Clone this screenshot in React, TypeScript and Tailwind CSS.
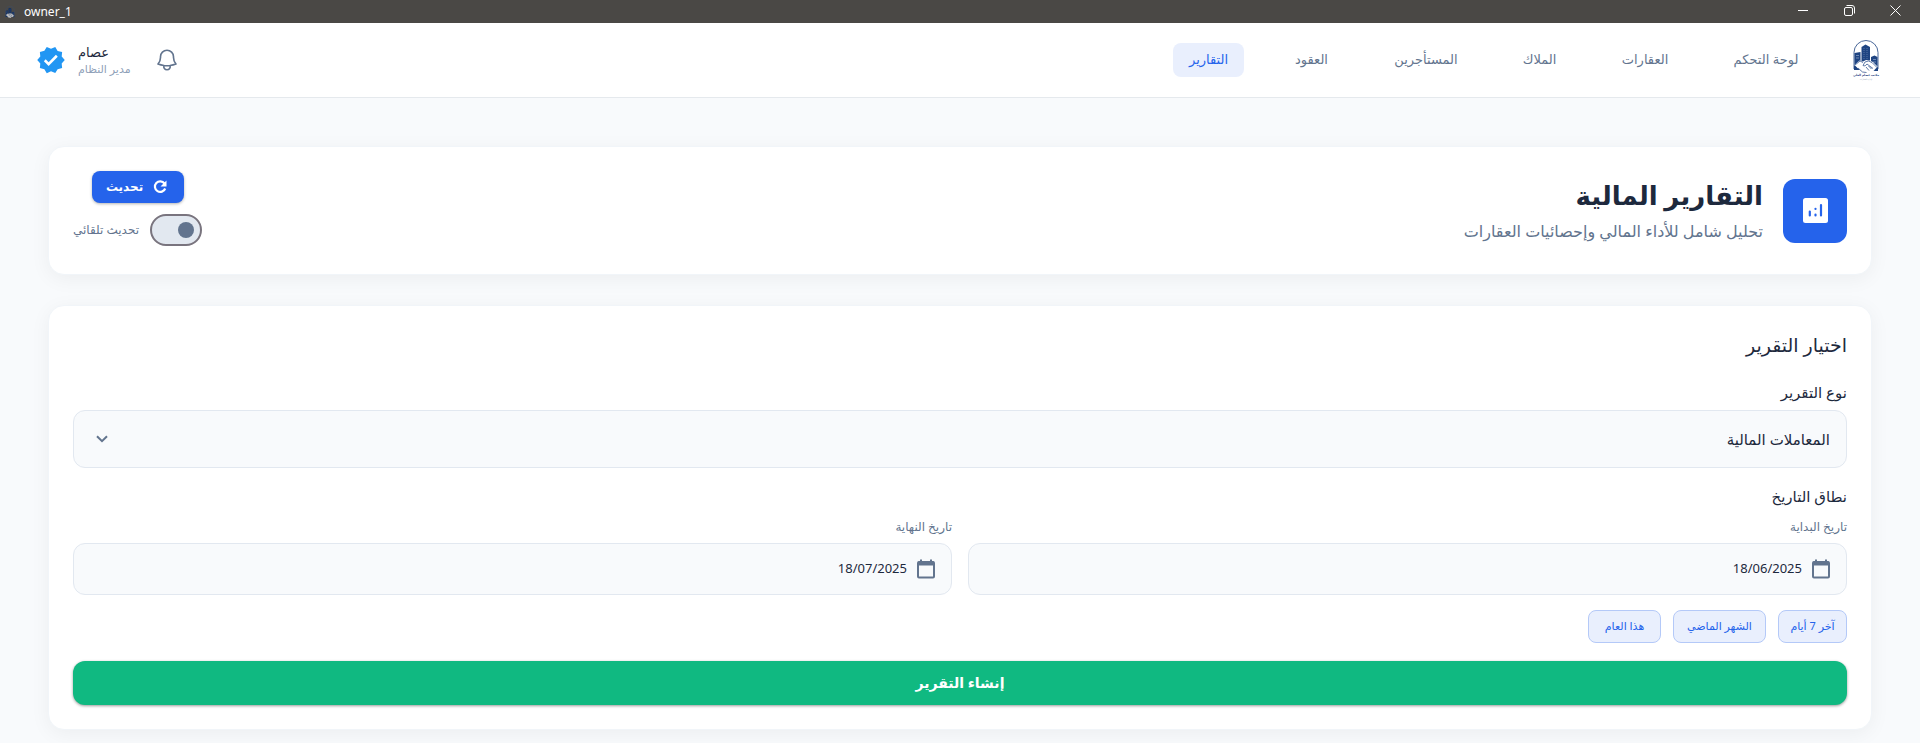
import React, { useState } from "react";
import { MdVerified } from "react-icons/md";
import { HiOutlineBell } from "react-icons/hi2";

const navItems: { label: string; width: string; active?: boolean }[] = [
  { label: "لوحة التحكم", width: "w-[100px]" },
  { label: "العقارات", width: "w-[78px]" },
  { label: "الملاك", width: "w-[69px]" },
  { label: "المستأجرين", width: "w-[94px]" },
  { label: "العقود", width: "w-[71px]" },
  { label: "التقارير", width: "w-[71px]", active: true },
];

const quickRanges = [
  { label: "آخر 7 أيام", width: "w-[69px]" },
  { label: "الشهر الماضي", width: "w-[93px]" },
  { label: "هذا العام", width: "w-[73px]" },
];

// Arch with three towers above a handshake
const LogoMark: React.FC<{ className?: string }> = ({ className }) => (
  <svg viewBox="0 0 26 33" className={className} aria-hidden="true">
    <path d="M1 29V12.500a12 12 0 0 1 24 0V29" fill="none" stroke="#4a6899" strokeWidth="1" />
    <path d="M1.500 13l6-1v18h-4l-2-2z" fill="#1e4482" />
    <path d="M8.500 7l4-2.500L17 7v20H8.500z" fill="#1e4482" />
    <path d="M18 17l3.500-1.500 3 1.500v11l-2 2H18z" fill="#1e4482" />
    <path d="M11 8v12M14 8v12" stroke="#8fa5c8" strokeWidth=".5" strokeDasharray="1 1" />
    <path d="M3 15.500h3M3 18h3M20 19.500h3M20 22h3" stroke="#8fa5c8" strokeWidth=".7" />
    <path
      d="M1.500 25l5-4.500 3.500 1 3-1.500 4 .5 3 1.500 4.500 4.500-3 3.500-4 .5-3.500 2.500-5-1-4-3.500z"
      fill="#fff"
    />
    <path
      d="M2 25l5-4 3 1.500M10 25.500l2-3.500 3.500-1 3.500 1.500 5 5M10 25.500c1.500 1 3 0 4-1.500l6 4.500M5 28l4.500 4 4 .5M13 27l3 3.500M15.500 26l3 3"
      fill="none"
      stroke="#1e4482"
      strokeWidth=".7"
    />
    <path d="M1 25.500l5 4.500H1zM25 27l-4.500 4H25z" fill="#1e4482" />
  </svg>
);

const ReportIcon: React.FC<{ className?: string }> = ({ className }) => (
  <svg viewBox="0 0 25 25" className={className} aria-hidden="true">
    <rect width="25" height="25" rx="2.500" fill="currentColor" />
    <g stroke="#2563eb" strokeWidth="2.200" strokeLinecap="round">
      <path d="M6.800 13.500v4M12.500 16.500v1M12.500 10.800v.1M18 7v10.500" />
    </g>
  </svg>
);

const CalendarIcon: React.FC<{ className?: string }> = ({ className }) => (
  <svg viewBox="0 0 18 20" className={className} aria-hidden="true">
    <rect x="1" y="3" width="16" height="15.500" rx="1" fill="none" stroke="currentColor" strokeWidth="2" />
    <path d="M1 2.500h16v4H1zM3 .5h2v3H3zM13 .5h2v3h-2z" fill="currentColor" />
  </svg>
);

const RefreshIcon: React.FC<{ className?: string }> = ({ className }) => (
  <svg viewBox="0 0 18 18" className={className} fill="none" aria-hidden="true">
    <path d="M13.500 5.500A5.300 5.300 0 1 0 14.200 10.500" stroke="currentColor" strokeWidth="2.200" />
    <path d="M15.500 2.500V8.500H9.500z" fill="currentColor" />
  </svg>
);

const ChevronIcon: React.FC<{ className?: string }> = ({ className }) => (
  <svg viewBox="0 0 12 8" className={className} fill="none" aria-hidden="true">
    <path d="M1 1.200l5 5 5-5" stroke="currentColor" strokeWidth="2" />
  </svg>
);

const TitleBar = () => (
  <div
    dir="ltr"
    className="flex h-[23px] items-center justify-between bg-[#4a4845] pr-0.5 pl-1 text-white"
  >
    <div className="flex items-center gap-2">
      <LogoMark className="h-3 w-3 brightness-75" />
      <span className="font-['Noto_Sans',sans-serif] text-xs">owner_1</span>
    </div>
    <div className="flex pb-0.5">
      <button type="button" aria-label="Minimize" className="flex w-[46px] justify-center">
        <svg width="11" height="11" viewBox="0 0 11 11" stroke="#fff" fill="none">
          <path d="M0 5.500h10" />
        </svg>
      </button>
      <button type="button" aria-label="Restore" className="flex w-[46px] justify-center">
        <svg width="11" height="11" viewBox="0 0 11 11" stroke="#fff" fill="none">
          <rect x=".5" y="2.500" width="8" height="8" rx="1.500" />
          <path d="M2.500 .5H8a2.500 2.500 0 0 1 2.500 2.500v5.500" />
        </svg>
      </button>
      <button type="button" aria-label="Close" className="flex w-[46px] justify-center">
        <svg width="11" height="11" viewBox="0 0 11 11" stroke="#fff" fill="none">
          <path d="M.5 .5l10 10M10.500 .5l-10 10" />
        </svg>
      </button>
    </div>
  </div>
);

const Header = () => (
  <header className="flex h-[75px] items-center justify-between border-b border-[#e5e9ed] bg-white pr-10 pl-9">
    <div className="flex items-center gap-9">
      <div className="flex w-7 flex-col items-center">
        <LogoMark className="h-[33px] w-[26px]" />
        <span className="text-[3px] leading-[5px] font-bold whitespace-nowrap text-[#1e4482]">
          مكتب عصام العلي
        </span>
        <span className="text-[2px] leading-[3px] whitespace-nowrap text-slate-400">
          لإدارة العقارات
        </span>
      </div>
      <nav className="flex items-center gap-8">
        {navItems.map((item) => (
          <a
            key={item.label}
            href="#"
            className={`flex h-[34px] items-center justify-center rounded-lg text-[13px] whitespace-nowrap ${item.width} ${
              item.active ? "bg-[#e9effd] font-medium text-[#2563eb]" : "text-slate-500"
            }`}
          >
            {item.label}
          </a>
        ))}
      </nav>
    </div>
    <div className="flex items-center gap-3">
      <button type="button" aria-label="الإشعارات" className="ml-2.5 text-slate-500">
        <HiOutlineBell className="size-[26px]" />
      </button>
      <div className="flex w-[54px] flex-col items-end whitespace-nowrap">
        <span className="text-[13px] leading-[18px] text-slate-800">عصام</span>
        <span className="text-[11px] leading-4 text-slate-400">مدير النظام</span>
      </div>
      <MdVerified className="size-[30px] text-[#2196f3]" />
    </div>
  </header>
);

const PageHeader = () => {
  const [autoRefresh, setAutoRefresh] = useState(false);

  return (
    <section className="flex items-center justify-between rounded-2xl border border-slate-100 bg-white p-6 shadow-[0_4px_20px_rgba(0,0,0,0.05)]">
      <div className="flex items-center gap-5">
        <div className="flex size-16 items-center justify-center rounded-xl bg-[#2563eb]">
          <ReportIcon className="size-[25px] text-white" />
        </div>
        <div className="pt-1">
          <h1 className="text-[26px] leading-9 font-bold text-slate-800">التقارير المالية</h1>
          <p className="text-base leading-9 text-slate-500">
            تحليل شامل للأداء المالي وإحصائيات العقارات
          </p>
        </div>
      </div>
      <div className="flex flex-col items-center gap-[11px] pb-1">
        <button
          type="button"
          className="flex h-8 w-[92px] items-center justify-center gap-2 rounded-lg bg-[#2563eb] text-xs font-semibold text-white shadow-[0_1px_3px_rgba(0,0,0,0.3)]"
        >
          <RefreshIcon className="size-[18px]" />
          تحديث
        </button>
        <label className="flex items-center gap-[11px] text-xs text-slate-500">
          <input
            type="checkbox"
            role="switch"
            checked={autoRefresh}
            onChange={(e) => setAutoRefresh(e.target.checked)}
            className="h-8 w-[52px] appearance-none rounded-full border-2 border-[#79747e] bg-slate-200 p-1.5 before:block before:size-4 before:rounded-full before:bg-slate-500 checked:bg-blue-200 checked:before:mr-5"
          />
          تحديث تلقائي
        </label>
      </div>
    </section>
  );
};

const DateField: React.FC<{ id: string; label: string; initial: string }> = ({
  id,
  label,
  initial,
}) => {
  const [value, setValue] = useState(initial);

  return (
    <div className="flex-1">
      <label htmlFor={id} className="block h-[26px] text-xs leading-5 text-slate-500">
        {label}
      </label>
      <div className="flex h-[52px] items-center gap-2.5 rounded-xl border border-slate-200 bg-slate-50 px-4">
        <CalendarIcon className="h-5 w-[18px] text-slate-500" />
        <input
          id={id}
          type="text"
          value={value}
          onChange={(e) => setValue(e.target.value)}
          className="min-w-0 flex-1 bg-transparent font-['Noto_Sans',sans-serif] text-[13px] text-slate-800 outline-none"
        />
      </div>
    </div>
  );
};

const ReportForm = () => (
  <section className="rounded-2xl border border-slate-100 bg-white p-6 shadow-[0_4px_20px_rgba(0,0,0,0.05)]">
    <h2 className="h-8 text-[19px] leading-[30px] text-slate-800">اختيار التقرير</h2>
    <label htmlFor="report-type" className="mt-4 block h-8 text-[15px] leading-7 text-slate-800">
      نوع التقرير
    </label>
    <div className="relative">
      <select
        id="report-type"
        className="h-[58px] w-full appearance-none rounded-xl border border-slate-200 bg-slate-50 px-4 text-[15px] text-slate-800"
      >
        <option>المعاملات المالية</option>
      </select>
      <ChevronIcon className="pointer-events-none absolute top-[25px] left-[23px] h-2 w-3 text-slate-500" />
    </div>
    <h3 className="mt-[14px] h-[35px] text-[15px] leading-7 text-slate-800">نطاق التاريخ</h3>
    <div className="flex gap-4">
      <DateField id="start-date" label="تاريخ البداية" initial="18/06/2025" />
      <DateField id="end-date" label="تاريخ النهاية" initial="18/07/2025" />
    </div>
    <div className="mt-[15px] flex gap-3">
      {quickRanges.map((range) => (
        <button
          key={range.label}
          type="button"
          className={`h-[33px] rounded-lg border border-[#b4c9f8] bg-[#e9effd] text-[11px] whitespace-nowrap text-[#2563eb] ${range.width}`}
        >
          {range.label}
        </button>
      ))}
    </div>
    <button
      type="button"
      className="mt-[18px] h-11 w-full rounded-xl bg-[#10b981] text-sm font-semibold text-white shadow-[0_1px_3px_rgba(0,0,0,0.4)]"
    >
      إنشاء التقرير
    </button>
  </section>
);

export default function App() {
  return (
    <div
      dir="rtl"
      className="min-h-screen bg-slate-50 font-['Noto_Sans','DejaVu_Sans',sans-serif]"
    >
      <TitleBar />
      <Header />
      <main className="flex flex-col gap-[30px] px-12 pt-12 pb-3">
        <PageHeader />
        <ReportForm />
      </main>
    </div>
  );
}
